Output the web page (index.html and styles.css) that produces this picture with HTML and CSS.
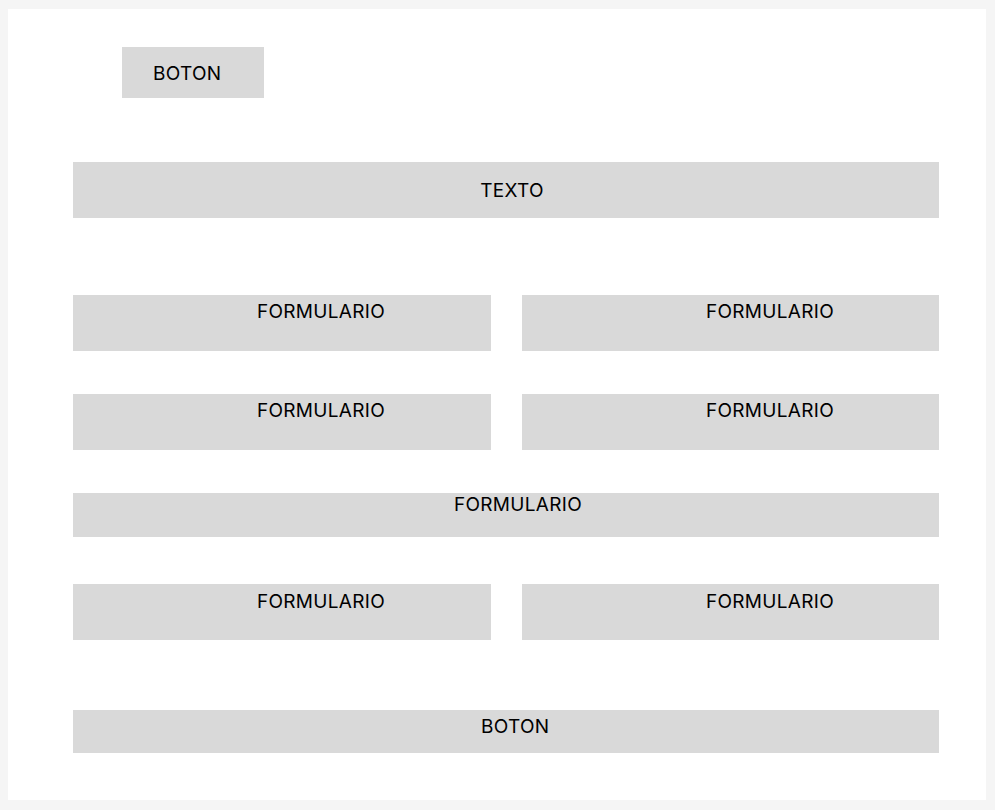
FILE: index.html
```html
<!DOCTYPE html>
<html lang="es">
<head>
<meta charset="utf-8">
<title>Wireframe</title>
<link rel="stylesheet" href="styles.css">
</head>
<body>
<div class="frame">
  <div class="top-btn">BOTON</div>
  <div class="content">
    <div class="texto">TEXTO</div>
    <div class="row row-1">
      <div class="field">FORMULARIO</div>
      <div class="field">FORMULARIO</div>
    </div>
    <div class="row row-2">
      <div class="field">FORMULARIO</div>
      <div class="field">FORMULARIO</div>
    </div>
    <div class="wide-field">FORMULARIO</div>
    <div class="row row-4">
      <div class="field">FORMULARIO</div>
      <div class="field">FORMULARIO</div>
    </div>
    <div class="bottom-btn">BOTON</div>
  </div>
</div>
</body>
</html>
```

FILE: styles.css
```css
* { box-sizing: border-box; }

html, body {
  margin: 0;
  padding: 0;
}

body {
  background: #f5f5f5;
  padding: 9px 9px 10px 8px;
  font-family: Inter, "Noto Sans", "Liberation Sans", sans-serif;
  font-size: 19px;
  line-height: 23px;
  letter-spacing: 0.3px;
  color: #000;
}

.frame {
  background: #fff;
  width: 978px;
  height: 791px;
  padding-top: 38px;
}

.top-btn {
  margin-left: 114px;
  width: 142px;
  height: 51px;
  background: #d9d9d9;
  padding: 15px 0 0 31px;
}

.content {
  margin-left: 65px;
  width: 866px;
  padding-top: 64px;
}

.texto {
  background: #d9d9d9;
  height: 56px;
  padding-top: 17px;
  padding-left: 12px;
  text-align: center;
}

.row {
  display: grid;
  grid-template-columns: 418px 417px;
  column-gap: 31px;
}

.row-1 { margin-top: 77px; }
.row-2 { margin-top: 43px; }
.row-4 { margin-top: 47px; }

.field {
  background: #d9d9d9;
  height: 56px;
  padding: 5px 0 0 184px;
}

.row-4 .field { padding-top: 6px; }

.wide-field {
  margin-top: 43px;
  background: #d9d9d9;
  height: 44px;
  padding: 0 0 0 381px;
}

.bottom-btn {
  margin-top: 70px;
  background: #d9d9d9;
  height: 43px;
  padding: 5px 0 0 408px;
}
```
